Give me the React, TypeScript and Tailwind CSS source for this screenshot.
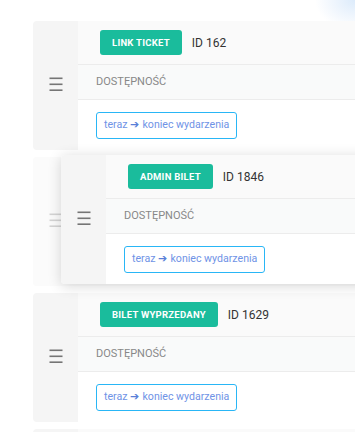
import React from "react";

function Hamburger({ faded }: { faded?: boolean }) {
  return (
    <svg width="14" height="14" viewBox="0 0 14 14" className="block mt-[-3px]">
      <rect x="0.5" y="0.5" width="13" height="1.6" fill={faded ? "#bbbbbb" : "#757575"} />
      <rect x="0.5" y="6.5" width="13" height="1.6" fill={faded ? "#bbbbbb" : "#757575"} />
      <rect x="0.5" y="12.4" width="13" height="1.6" fill={faded ? "#bbbbbb" : "#757575"} />
    </svg>
  );
}

function Card({ badge, id, className = "" }: { badge: string; id: string; className?: string }) {
  return (
    <div className={"flex w-[360px] h-[129px] rounded-[4px] overflow-hidden bg-white " + className}>
      <div className="w-[45px] shrink-0 bg-[#f5f5f5] flex items-center justify-center">
        <Hamburger />
      </div>
      <div className="flex-1 flex flex-col">
        <div className="h-[44px] shrink-0 bg-[#fafafa] border-b border-[#ececec] flex items-center pl-[22px] gap-[10px]">
          <span className="h-[25px] px-[12px] rounded-[3px] bg-[#1abc9c] text-white text-[9.5px] font-bold tracking-[0.25px] flex items-center leading-none">
            {badge}
          </span>
          <span className="text-[12px] text-[#333]">{id}</span>
        </div>
        <div className="h-[35px] shrink-0 bg-[#f9fafa] border-b border-[#ececec] flex items-center pl-[18px] text-[11px] text-[#888]">
          DOSTĘPNOŚĆ
        </div>
        <div className="flex-1 flex items-center pl-[18px]">
          <span className="h-[27px] px-[7px] border border-[#29b6f6] rounded-[3px] flex items-center text-[10.6px] text-[#6f93e6] leading-none">
            teraz<span className="mx-[3px] text-[#5a7fd8]">➔</span>koniec wydarzenia
          </span>
        </div>
      </div>
    </div>
  );
}

export default function App() {
  return (
    <div
      className="relative w-[355px] h-[432px] overflow-hidden bg-white bg-[radial-gradient(ellipse_40px_30px_at_100%_0%,#dcebfb_0%,#eef5fd_50%,rgba(255,255,255,0)_100%)]"
      style={{ fontFamily: "Roboto, 'Noto Sans', sans-serif" }}
    >
      <div className="flex flex-col gap-[7px] pt-[21px] pl-[33px]">
        <Card badge="LINK TICKET" id="ID 162" />
        <div className="relative h-[129px]">
          <div className="opacity-30">
            <Card badge="ADMIN BILET" id="ID 1846" className="!bg-[#f5f5f5]" />
          </div>
          <div className="absolute left-[28px] top-[-2px]">
            <Card badge="ADMIN BILET" id="ID 1846" className="shadow-[0_2px_14px_rgba(0,0,0,0.16)]" />
          </div>
        </div>
        <Card badge="BILET WYPRZEDANY" id="ID 1629" />
        <Card badge="LINK TICKET" id="ID 162" />
      </div>
    </div>
  );
}
